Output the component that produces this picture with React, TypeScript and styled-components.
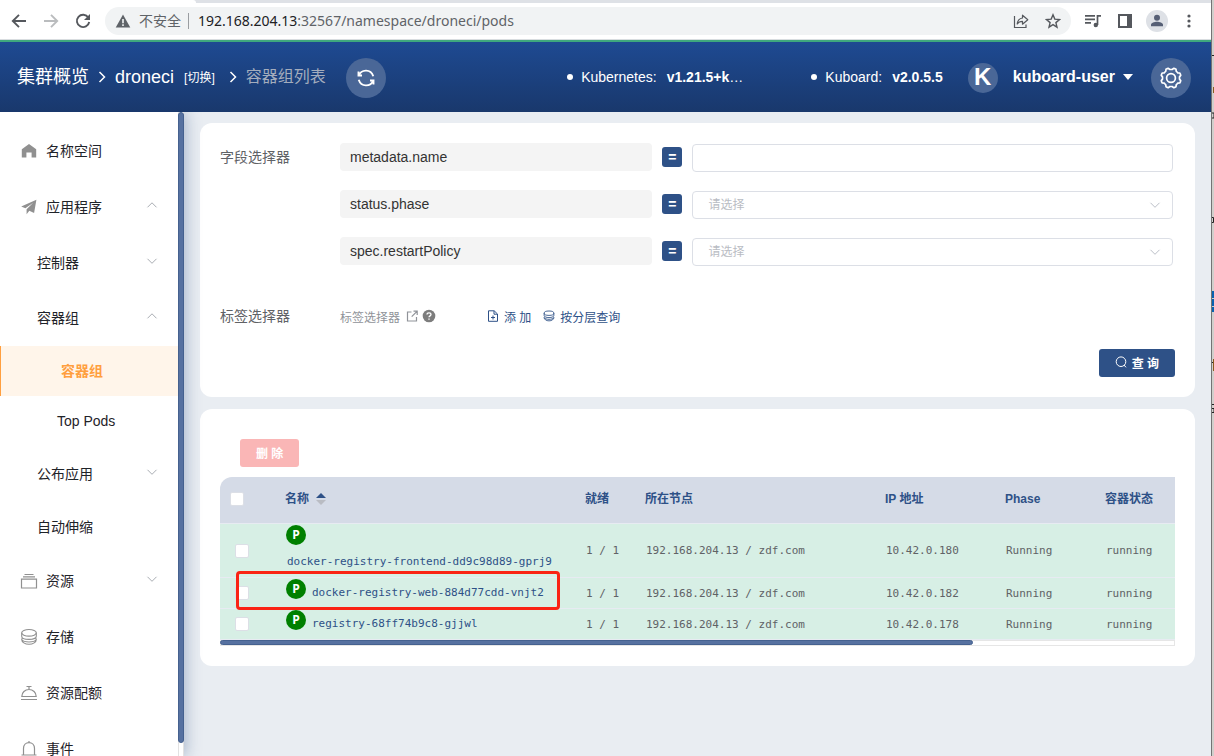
import React from "react";
import styled, { createGlobalStyle } from "styled-components";

const SANS = `"Liberation Sans", "Noto Sans CJK SC", sans-serif`;
const MONO = `"DejaVu Sans Mono", "Noto Sans CJK SC", monospace`;
const NAVY = "#2e5187";

const GlobalStyle = createGlobalStyle`
  *, *::before, *::after { box-sizing: border-box; }
  body { margin: 0; font-family: ${SANS}; font-size: 14px; color: #303133; }
  button, input, select { font-family: inherit; margin: 0; }
  a { color: inherit; text-decoration: none; }
  ul { list-style: none; margin: 0; padding: 0; }
`;

/* ---------- frame ---------- */

const Screen = styled.div`
  display: flex;
  height: 100vh;
  overflow: hidden;
`;
const BrowserWindow = styled.div`
  flex: 1;
  min-width: 0;
  display: flex;
  flex-direction: column;
`;
const WindowBehind = styled.svg`
  flex: none;
  width: 3px;
  height: 756px;
  background: #d2cfcc;
`;

/* ---------- browser toolbar ---------- */

const TabEdge = styled.div`
  flex: none;
  height: 3px;
  padding-right: calc(100% - 196px);
  background: #dee1e6;
  &::before {
    content: "";
    display: block;
    height: 3px;
    background: #fff;
    border-radius: 0 3px 0 0;
  }
`;
const Toolbar = styled.div`
  flex: none;
  display: flex;
  align-items: center;
  height: 37px;
  padding: 0 6px 0 9px;
  border-bottom: 1px solid #d9dde0;
  background: #fff;
`;
const ToolButton = styled.button<{ $dim?: boolean }>`
  flex: none;
  display: flex;
  align-items: center;
  justify-content: center;
  width: 32px;
  height: 28px;
  padding: 0;
  border: 0;
  background: none;
  color: ${(p) => (p.$dim ? "#babcbe" : "#55585d")};
`;
const NavTools = styled.div`
  display: flex;
  width: 96px;
  margin-left: -6px;
`;
const AddressBar = styled.div`
  flex: 1;
  min-width: 0;
  display: flex;
  align-items: center;
  height: 28px;
  margin: 0 6px;
  padding: 0 2px 0 10px;
  border-radius: 14px;
  background: #f1f3f4;
  color: #5f6368;
  white-space: nowrap;
`;
const Insecure = styled.span`
  margin-left: 8px;
  padding-right: 7px;
  border-right: 1px solid #9a9da1;
  line-height: 16px;
`;
const Url = styled.span`
  flex: 1;
  padding-left: 9px;
  font-family: "Noto Sans", sans-serif;
  line-height: 20px;
  b { font-weight: 400; color: #202124; }
`;
const Avatar = styled.span`
  display: flex;
  width: 22px;
  height: 22px;
  border-radius: 50%;
  background: #dee1e6;
  color: #565f75;
`;

/* ---------- app header ---------- */

const Header = styled.header`
  flex: none;
  display: flex;
  align-items: center;
  height: 72px;
  padding: 0 20px 0 17px;
  border-top: 2px solid #3fa87e;
  background: linear-gradient(#1e4a92, #19386c);
  color: #fff;
  white-space: nowrap;
`;
const Crumbs = styled.nav`
  flex: 1;
  display: flex;
  align-items: center;
  font-size: 18px;
  line-height: 24px;
  > svg { margin: 0 9px; }
`;
const SwitchLink = styled.a`
  margin: 2px 5px 0 10px;
  font-size: 12px;
`;
const Current = styled.span`
  font-size: 16px;
  color: #a4adbd;
`;
const RoundButton = styled.button`
  display: flex;
  align-items: center;
  justify-content: center;
  width: 40px;
  height: 40px;
  margin-top: 2px;
  padding: 0;
  border: 0;
  border-radius: 50%;
  background: #4a6797;
  color: #fff;
`;
const RefreshButton = styled(RoundButton)`
  margin-left: 20px;
`;
const Version = styled.div`
  display: flex;
  align-items: center;
  margin-left: 68px;
  line-height: 20px;
  &::before {
    content: "";
    width: 6px;
    height: 6px;
    margin-right: 8px;
    border-radius: 50%;
    background: #fff;
  }
  b { margin-left: 10px; }
`;
const UserBadge = styled.span`
  width: 30px;
  height: 30px;
  margin: 2px 15px 0 25px;
  border-radius: 50%;
  background: #4a6797;
  font-size: 24px;
  font-weight: 700;
  line-height: 28px;
  text-align: center;
`;
const UserButton = styled.button`
  display: flex;
  align-items: center;
  gap: 8px;
  margin-right: 18px;
  padding: 0;
  border: 0;
  background: none;
  color: #fff;
  font-size: 16px;
  font-weight: 700;
`;

/* ---------- sidebar ---------- */

const Body = styled.div`
  flex: 1;
  min-height: 0;
  display: flex;
  background: #e9edf2;
`;
const Sidebar = styled.aside`
  flex: none;
  display: flex;
  width: 184px;
  background: #fff;
  box-shadow: 2px 0 14px rgba(46, 81, 135, 0.35);
  clip-path: inset(0 -20px 0 0);
`;
const Menu = styled.ul`
  flex: 1;
  padding-top: 11px;
  overflow: hidden;
`;
const SubMenu = styled.ul<{ $spaced?: boolean }>`
  padding-top: ${(p) => (p.$spaced ? 1 : 0)}px;
`;
const levels = {
  top: { height: 56, pad: 20 },
  sub: { height: 55, pad: 37 },
  leaf: { height: 52, pad: 37 },
};
const MenuLink = styled.a<{ $level: keyof typeof levels }>`
  display: flex;
  align-items: center;
  height: ${(p) => levels[p.$level].height}px;
  padding: 0 20px 0 ${(p) => levels[p.$level].pad}px;
  line-height: 20px;
  color: #1f2329;
  > svg:first-child { margin-right: 8px; color: #909090; }
  > svg:last-child { margin-bottom: 4px; color: #a9adb3; }
`;
const MenuText = styled.span`
  flex: 1;
`;
const PodLink = styled.a<{ $active?: boolean }>`
  display: flex;
  align-items: center;
  height: 50px;
  padding-left: ${(p) => (p.$active ? 61 : 57)}px;
  line-height: 20px;
  color: ${(p) => (p.$active ? "#ff9f3f" : "#1f2329")};
  font-weight: ${(p) => (p.$active ? 700 : 400)};
  background: ${(p) => (p.$active ? "#fff5ea" : "none")};
  box-shadow: ${(p) => (p.$active ? "inset 1px 0 #ff9f3f" : "none")};
`;
const ScrollTrack = styled.div`
  flex: none;
  width: 6px;
  background: #fff;
  border-left: 1px solid #e2e2e2;
  border-right: 1px solid #e2e2e2;
`;
const ScrollThumb = styled.div`
  height: 98%;
  margin: 0 -1px;
  border: 1px solid #45618f;
  border-radius: 3px;
  background: #5671a0;
`;

/* ---------- content ---------- */

const Main = styled.main`
  flex: 1;
  min-width: 0;
  display: flex;
  flex-direction: column;
  gap: 12px;
  padding: 11px 16px;
`;
const Card = styled.section`
  padding: 20px;
  border-radius: 12px;
  background: #fff;
`;
const FieldGroup = styled.div`
  display: grid;
  grid-template-columns: 120px minmax(0, 1fr);
  padding-right: 2px;
`;
const GroupLabel = styled.div`
  line-height: 28px;
  color: #606266;
`;
const FieldRows = styled.div`
  display: grid;
  gap: 19px;
`;
const FieldRow = styled.div`
  display: grid;
  grid-template-columns: minmax(0, 13fr) 20px minmax(0, 20fr);
  align-items: center;
  gap: 10px;
`;
const FieldKey = styled.label`
  padding: 0 10px;
  border-radius: 4px;
  background: #f4f4f4;
  line-height: 28px;
  color: #333;
`;
const Equals = styled.button`
  height: 20px;
  padding: 0;
  border: 0;
  border-radius: 3px;
  background: ${NAVY};
  color: #fff;
  font-size: 14px;
  font-weight: 700;
  line-height: 18px;
`;
const Control = styled.div`
  display: grid;
  align-items: center;
  height: 28px;
  border: 1px solid #dcdfe6;
  border-radius: 4px;
  margin-top: 1px;
  margin-bottom: -1px;
  > * { grid-area: 1 / 1; }
  > svg { justify-self: end; margin-right: 11px; color: #bcc0c8; pointer-events: none; }
`;
const TextInput = styled.input`
  width: 100%;
  height: 26px;
  padding: 0 15px;
  border: 0;
  border-radius: 4px;
  background: none;
  font-size: 12px;
`;
const Select = styled.select`
  width: 100%;
  height: 26px;
  padding: 0 15px;
  border: 0;
  border-radius: 4px;
  background: none;
  appearance: none;
  color: #b9bcc3;
  font-size: 12px;
`;
const LabelSelector = styled(FieldGroup)`
  margin-top: 37px;
`;
const LabelTools = styled.div`
  display: flex;
  align-items: center;
  height: 28px;
  font-size: 12px;
  color: #909399;
`;
const DocLink = styled.a`
  display: flex;
  align-items: center;
  gap: 6px;
  margin-right: 4px;
`;
const TextButton = styled.button`
  display: flex;
  align-items: center;
  gap: 5px;
  padding: 0;
  border: 0;
  background: none;
  color: ${NAVY};
  font-size: 12px;
`;
const ActionGroup = styled.div`
  display: flex;
  gap: 12px;
  margin-left: 51px;
`;
const FormFooter = styled.div`
  display: flex;
  justify-content: flex-end;
  margin-top: 19px;
`;
const SolidButton = styled.button<{ $tone: string }>`
  display: flex;
  align-items: center;
  gap: 5px;
  height: 28px;
  padding: 0 16px 2px;
  border: 0;
  border-radius: 3px;
  background: ${(p) => p.$tone};
  color: #fff;
  font-size: 12px;
  font-weight: 700;
`;
const TableActions = styled.div`
  display: flex;
  padding: 10px 20px;
`;

/* ---------- table ---------- */

const TableFrame = styled.div`
  overflow: hidden;
  border-radius: 12px 0 0 0;
`;
const PodTable = styled.table`
  width: 100%;
  table-layout: fixed;
  border-collapse: separate;
  border-spacing: 0;
`;
const Th = styled.th<{ $width?: number }>`
  width: ${(p) => (p.$width ? `${p.$width}px` : "auto")};
  height: 47px;
  padding: 0 10px 2px;
  border-bottom: 1px solid #e7ebf2;
  background: #d5dbe7;
  color: ${NAVY};
  font-size: 12px;
  font-weight: 700;
  line-height: 20px;
  text-align: left;
  white-space: nowrap;
`;
const SortButton = styled.button`
  display: flex;
  align-items: center;
  gap: 7px;
  padding: 0;
  border: 0;
  background: none;
  color: inherit;
  font: inherit;
`;
const Td = styled.td`
  position: relative;
  padding: 0 11px;
  border-bottom: 1px solid #e7ebf2;
  background: #d7efe5;
  color: #606266;
  font-family: ${MONO};
  font-size: 11px;
  white-space: nowrap;
`;
const CheckTd = styled(Td)`
  padding-left: 15px;
`;
const Checkbox = styled.input`
  display: block;
  width: 14px;
  height: 14px;
  margin: 0;
  border: 1px solid #dcdfe6;
  border-radius: 2px;
  background: #fff;
  appearance: none;
`;
const NameCell = styled.div`
  display: flex;
  flex-wrap: wrap;
  align-items: flex-start;
  column-gap: 5px;
`;
const PodMark = styled.span`
  width: 20px;
  height: 20px;
  margin: 1px 0 2px;
  border-radius: 50%;
  background: #008000;
  color: #fff;
  font-family: "Open Sans", sans-serif;
  font-size: 12px;
  font-weight: 700;
  line-height: 20px;
  text-align: center;
`;
const PodName = styled.a`
  padding: 0 1px;
  line-height: 30px;
  color: ${NAVY};
`;
const Highlight = styled.span`
  position: absolute;
  z-index: 1;
  top: -7px;
  left: 16px;
  width: 324px;
  height: 39px;
  border: 3px solid #fa2314;
  border-radius: 4px;
  pointer-events: none;
`;
const HTrack = styled.div`
  height: 6px;
  border: 1px solid #e6e6e6;
  background: #fff;
`;
const HThumb = styled.div`
  width: 79%;
  height: 5px;
  margin: -1px;
  border: 1px solid #45618f;
  border-radius: 3px;
  background: #5671a0;
`;

/* ---------- icons ---------- */

type IconProps = { size?: number; box?: number; w?: number; children: React.ReactNode };
const Icon = ({ size = 16, box = 16, w = 1, children }: IconProps) => (
  <svg width={size} height={size} viewBox={`0 0 ${box} ${box}`} fill="none" stroke="currentColor" strokeWidth={w} aria-hidden="true">
    {children}
  </svg>
);
const Chevron = ({ up = false }: { up?: boolean }) => (
  <Icon size={12} box={12}><path d={up ? "M1.5 8.3 6 3.8l4.5 4.5" : "M1.5 3.8 6 8.3l4.5-4.5"} /></Icon>
);
const CrumbArrow = () => (
  <svg width="8" height="14" viewBox="0 0 8 14" fill="none" stroke="currentColor" strokeWidth="1.5" aria-hidden="true">
    <path d="m1.5 2 5 5-5 5" />
  </svg>
);
const Layers = ({ size = 18 }: { size?: number }) => (
  <Icon size={size} box={18} w={size < 18 ? 1.3 : 1.1}>
    <ellipse cx="9" cy="4.800" rx="7.300" ry="3.300" />
    <path d="M1.700 4.800v3.400c0 1.800 3.200 3.200 7.300 3.200s7.300-1.400 7.300-3.200V4.800M2.500 10c-.5.500-.8 1-.8 1.500 0 2.500 3.200 4.800 7.300 4.800s7.300-2.300 7.300-4.800c0-.5-.3-1-.8-1.500M1.700 11.500c1 1.500 3.700 2.500 7.300 2.500s6.300-1 7.300-2.500" />
  </Icon>
);
const HomeIcon = () => (
  <Icon size={18} box={18}><path d="M9 2 1.8 7.2v8.4h4.6v-5.2h5.2v5.2h4.6V7.2z" fill="currentColor" stroke="none" /></Icon>
);
const PlaneIcon = () => (
  <Icon size={18} box={18}><path d="M16.400 1.800 1.200 8.400l4.200 1.900 7.800-5.600-6.600 6.500v5l2.700-3.400 4.800 2.300z" fill="currentColor" stroke="none" /></Icon>
);
const BoxIcon = () => (
  <Icon size={18} box={18} w={1.200}><path d="M4.500 2.500h9M3 4.800h12M1.500 7.200h15v8.800h-15z" /></Icon>
);
const DishIcon = () => (
  <Icon size={18} box={18} w={1.200}><path d="M6.500 2.500h5M9 3v2.500M1.800 12.500C1.800 8.600 5 5.500 9 5.500s7.200 3.100 7.200 7zM1 15.500h16" /></Icon>
);
const BellIcon = () => (
  <Icon size={18} box={18} w={1.200}><path d="M3.500 14.500V8.500C3.500 5 6 2.700 9 2.700s5.500 2.300 5.500 5.800v6M1.500 15h15M9 1v1.700M7.500 17h3" /></Icon>
);
const GearIcon = () => {
  const points = Array.from({ length: 48 }, (_, i) => {
    const r = 9.3 + 0.85 * Math.tanh(3 * Math.cos((i / 48) * 8 * 2 * Math.PI));
    const a = (i / 48) * 2 * Math.PI + Math.PI / 8;
    return `${(12 + r * Math.cos(a)).toFixed(1)} ${(12 + r * Math.sin(a)).toFixed(1)}`;
  });
  return (
    <Icon size={24} box={24} w={1.7}>
      <path d={`M${points.join("L")}Z`} strokeLinejoin="round" />
      <circle cx="12" cy="12" r="4.400" />
    </Icon>
  );
};

/* ---------- data ---------- */

const pods = [
  { name: "docker-registry-frontend-dd9c98d89-gprj9", ip: "10.42.0.180", marked: false },
  { name: "docker-registry-web-884d77cdd-vnjt2", ip: "10.42.0.182", marked: true },
  { name: "registry-68ff74b9c8-gjjwl", ip: "10.42.0.178", marked: false },
];

const Browser = () => (
  <>
    <TabEdge />
    <Toolbar>
      <NavTools>
        <ToolButton aria-label="后退"><Icon w={1.9}><path d="M15 8H2M8 1.800 1.800 8 8 14.200" /></Icon></ToolButton>
        <ToolButton aria-label="前进" $dim><Icon w={1.9}><path d="M1 8h13M8 1.800 14.200 8 8 14.200" /></Icon></ToolButton>
        <ToolButton aria-label="刷新页面">
          <Icon w={1.900}><path d="M13.300 4.500A6.200 6.200 0 1 0 14.200 9" /><path d="M15 1v6H9z" fill="currentColor" stroke="none" /></Icon>
        </ToolButton>
      </NavTools>
      <AddressBar>
        <Icon><path d="M8 1.500 15.300 14.500H.7z" fill="currentColor" stroke="none" /><path d="M8 6v4.200M8 11.300v1.700" stroke="#f1f3f4" strokeWidth="1.600" /></Icon>
        <Insecure>不安全</Insecure>
        <Url><b>192.168.204.13</b>:32567/namespace/droneci/pods</Url>
        <ToolButton aria-label="分享">
          <Icon w={1.200}><path d="M1.500 3v11.500h11.500v-3" /><path d="M9.500 5V2.200l5.300 4.500-5.300 4.500V8.400C7 8.400 5.400 9.200 4.200 11 4.500 7.800 6.500 5.400 9.500 5z" strokeLinejoin="round" /></Icon>
        </ToolButton>
        <ToolButton aria-label="收藏">
          <Icon w={1.400}><path d="m8 1.800 1.800 4.300 4.700.4-3.600 3.100 1.100 4.600-4-2.500-4 2.500 1.100-4.600L1.500 6.500l4.700-.4z" /></Icon>
        </ToolButton>
      </AddressBar>
      <ToolButton aria-label="媒体控制">
        <Icon w={1.700}><path d="M0 2.800h10M0 6.300h10M0 9.800h6M12.500 12V2.800H16" /><circle cx="10.800" cy="12" r="2.200" fill="currentColor" stroke="none" /></Icon>
      </ToolButton>
      <ToolButton aria-label="侧边栏">
        <Icon w={2}><path d="M2 2h12v12H2z" /><path d="M10 2h4v12h-4z" fill="currentColor" stroke="none" /></Icon>
      </ToolButton>
      <ToolButton aria-label="个人资料">
        <Avatar><Icon size={22} box={22}><circle cx="11" cy="7.800" r="3" fill="currentColor" stroke="none" /><path d="M5 16.200v-1.500c0-2 3.500-3 6-3s6 1 6 3v1.500z" fill="currentColor" stroke="none" /></Icon></Avatar>
      </ToolButton>
      <ToolButton aria-label="更多">
        <Icon><g fill="currentColor" stroke="none"><circle cx="8" cy="3" r="1.600" /><circle cx="8" cy="8" r="1.600" /><circle cx="8" cy="13" r="1.600" /></g></Icon>
      </ToolButton>
    </Toolbar>
  </>
);

const AppHeader = () => (
  <Header>
    <Crumbs>
      <a href="#cluster">集群概览</a>
      <CrumbArrow />
      <a href="#namespace">droneci</a>
      <SwitchLink href="#switch">[切换]</SwitchLink>
      <CrumbArrow />
      <Current>容器组列表</Current>
      <RefreshButton aria-label="刷新">
        <Icon size={20} box={20} w={1.900}><path d="M2.500 8.500V3.500M2.500 7.500H6M3 7.200C5 1.800 14.500 0 17.300 8.200M17.500 11.500v5M17.500 12.500H14M17 12.800C15 18.200 5.500 20 2.700 11.800" /></Icon>
      </RefreshButton>
    </Crumbs>
    <Version>Kubernetes:<b>v1.21.5+k</b>…</Version>
    <Version>Kuboard:<b>v2.0.5.5</b></Version>
    <UserBadge>K</UserBadge>
    <UserButton>
      kuboard-user
      <svg width="10" height="6" viewBox="0 0 10 6" fill="currentColor" aria-hidden="true"><path d="M0 0h10L5 6z" /></svg>
    </UserButton>
    <RoundButton aria-label="设置"><GearIcon /></RoundButton>
  </Header>
);

type EntryProps = { level?: keyof typeof levels; icon?: React.ReactNode; text: string; arrow?: "up" | "down"; children?: React.ReactNode };
const Entry = ({ level = "top", icon, text, arrow, children }: EntryProps) => (
  <li>
    <MenuLink href="#menu" $level={level}>
      {icon}
      <MenuText>{text}</MenuText>
      {arrow && <Chevron up={arrow === "up"} />}
    </MenuLink>
    {children}
  </li>
);

const SideNav = () => (
  <Sidebar>
    <Menu>
      <Entry icon={<HomeIcon />} text="名称空间" />
      <Entry icon={<PlaneIcon />} text="应用程序" arrow="up">
        <SubMenu>
          <Entry level="sub" text="控制器" arrow="down" />
          <Entry level="sub" text="容器组" arrow="up">
            <SubMenu $spaced>
              <li><PodLink href="#pods" $active>容器组</PodLink></li>
              <li><PodLink href="#top">Top Pods</PodLink></li>
            </SubMenu>
          </Entry>
          <Entry level="sub" text="公布应用" arrow="down" />
          <Entry level="leaf" text="自动伸缩" />
        </SubMenu>
      </Entry>
      <Entry icon={<BoxIcon />} text="资源" arrow="down" />
      <Entry icon={<Layers />} text="存储" />
      <Entry icon={<DishIcon />} text="资源配额" />
      <Entry icon={<BellIcon />} text="事件" />
    </Menu>
    <ScrollTrack><ScrollThumb /></ScrollTrack>
  </Sidebar>
);

const Filters = () => (
  <Card>
    <FieldGroup>
      <GroupLabel>字段选择器</GroupLabel>
      <FieldRows>
        <FieldRow>
          <FieldKey htmlFor="name">metadata.name</FieldKey>
          <Equals>=</Equals>
          <Control><TextInput id="name" /></Control>
        </FieldRow>
        {["status.phase", "spec.restartPolicy"].map((key) => (
          <FieldRow key={key}>
            <FieldKey htmlFor={key}>{key}</FieldKey>
            <Equals>=</Equals>
            <Control>
              <Select id={key}><option>请选择</option></Select>
              <Chevron />
            </Control>
          </FieldRow>
        ))}
      </FieldRows>
    </FieldGroup>
    <LabelSelector>
      <GroupLabel>标签选择器</GroupLabel>
      <LabelTools>
        <DocLink href="#docs">
          标签选择器
          <Icon size={12} box={12} w={1.200}><path d="M5.500 2H1.500v9h9V7M7.500 1.200h3.700v3.700M11 1.400 5.700 6.700" /></Icon>
        </DocLink>
        <Icon size={14} box={14}><circle cx="7" cy="7" r="6.300" fill="#7d7d7d" stroke="none" /><path d="M5 5.600c0-2.400 4-2.400 4 0 0 1.300-2 1.300-2 2.700M7 9.400v1.300" stroke="#fff" strokeWidth="1.300" /></Icon>
        <ActionGroup>
          <TextButton>
            <Icon size={12} box={12}><path d="M1.500.8h5.700l3.300 3.200v7.300h-9zM7 1v3.200h3.300M6 5.500v4M4 7.500h4" /></Icon>
            添 加
          </TextButton>
          <TextButton><Layers size={12} />按分层查询</TextButton>
        </ActionGroup>
      </LabelTools>
    </LabelSelector>
    <FormFooter>
      <SolidButton $tone={NAVY}>
        <Icon size={12} box={12}><circle cx="6" cy="5.700" r="4.800" /><path d="m9 9 2 2.300" /></Icon>
        查 询
      </SolidButton>
    </FormFooter>
  </Card>
);

const Pods = () => (
  <Card>
    <TableActions><SolidButton $tone="#fab6b6">删 除</SolidButton></TableActions>
    <TableFrame>
      <PodTable>
        <thead>
          <tr>
            <Th $width={55}><Checkbox type="checkbox" aria-label="全选" /></Th>
            <Th $width={300}>
              <SortButton>
                名称
                <svg width="10" height="12" viewBox="0 0 10 12" aria-hidden="true"><path d="M0 5h10L5 0z" fill={NAVY} /><path d="M0 7h10l-5 5z" fill="#b9bcc3" /></svg>
              </SortButton>
            </Th>
            <Th $width={60}>就绪</Th>
            <Th $width={240}>所在节点</Th>
            <Th $width={120}>IP 地址</Th>
            <Th $width={100}>Phase</Th>
            <Th>容器状态</Th>
          </tr>
        </thead>
        <tbody>
          {pods.map((pod) => (
            <tr key={pod.name}>
              <CheckTd>
                <Checkbox type="checkbox" aria-label={pod.name} />
                {pod.marked && <Highlight />}
              </CheckTd>
              <Td><NameCell><PodMark>P</PodMark><PodName href="#pod">{pod.name}</PodName></NameCell></Td>
              <Td>1 / 1</Td>
              <Td>192.168.204.13 / zdf.com</Td>
              <Td>{pod.ip}</Td>
              <Td>Running</Td>
              <Td>running</Td>
            </tr>
          ))}
        </tbody>
      </PodTable>
      <HTrack><HThumb /></HTrack>
    </TableFrame>
  </Card>
);

export default function App() {
  return (
    <Screen>
      <GlobalStyle />
      <BrowserWindow>
        <Browser />
        <AppHeader />
        <Body>
          <SideNav />
          <Main>
            <Filters />
            <Pods />
          </Main>
        </Body>
      </BrowserWindow>
      <WindowBehind viewBox="0 0 3 756" aria-hidden="true">
        <path d="M1 55.500h2M1 217.500h1.500v5H1M1 362.500h2M1 404.500h2M1 408.500h2v4H1M1 113h2v5H1" fill="none" stroke="#222" />
        <path d="M2 87h1v6H2zM2 359h1v12H2z" fill="#8a5a1e" />
        <path d="M1 291h2v21H1z" fill="#0a62b0" />
        <path d="M1 298.500h2M1 306.500h2" stroke="#d2cfcc" />
        <path d="M.5 0v756" stroke="#747474" />
      </WindowBehind>
    </Screen>
  );
}
